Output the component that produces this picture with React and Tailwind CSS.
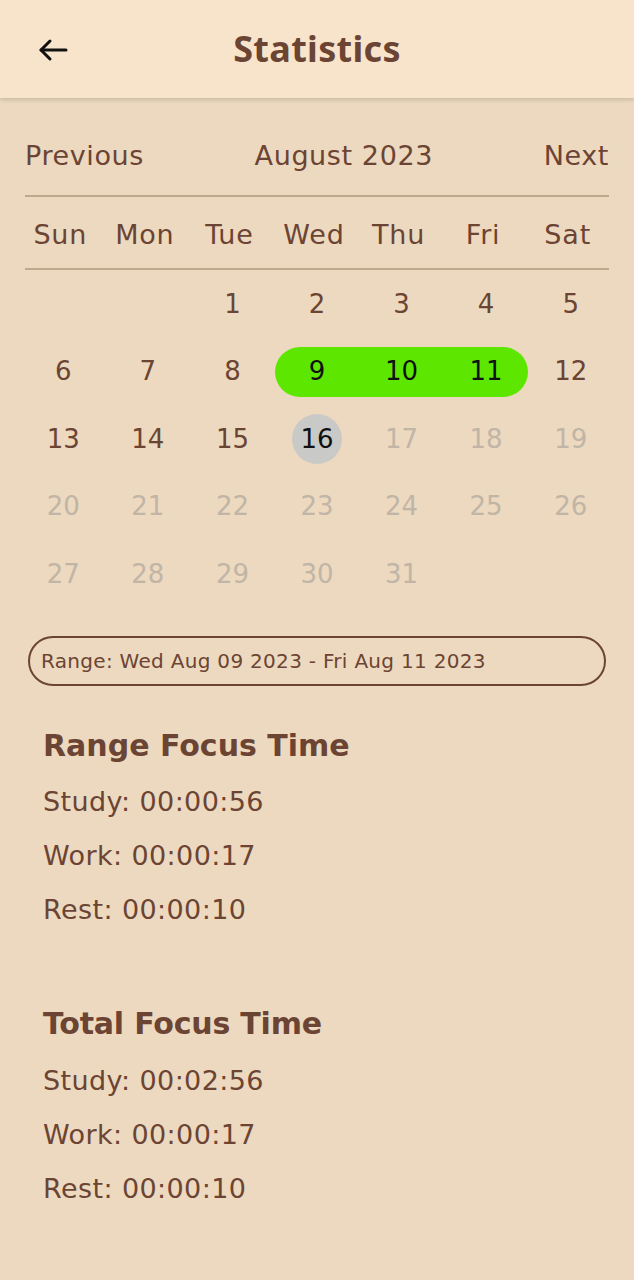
import React from "react";

const brown = "text-[#6b4434]";

function Arrow() {
  return (
    <svg width="32" height="24" viewBox="0 0 32 24" fill="none" stroke="#111" strokeWidth="3" strokeLinecap="round" strokeLinejoin="round">
      <path d="M29 12H4" />
      <path d="M13 3L4 12L13 21" />
    </svg>
  );
}

const rows = [
  [null, null, 1, 2, 3, 4, 5],
  [6, 7, 8, 9, 10, 11, 12],
  [13, 14, 15, 16, 17, 18, 19],
  [20, 21, 22, 23, 24, 25, 26],
  [27, 28, 29, 30, 31, null, null],
];

function Cell({ d }) {
  if (d === null) return <div className="h-[50px]" />;
  let cls = "h-[50px] flex items-center justify-center text-[26px] ";
  let inner = null;
  if (d >= 9 && d <= 11) {
    cls += "bg-[#5ce600] text-[#111]";
    if (d === 9) cls += " rounded-l-full";
    if (d === 11) cls += " rounded-r-full";
    inner = d;
  } else if (d === 16) {
    return (
      <div className={cls}>
        <div className="w-[50px] h-[50px] rounded-full bg-[#c9c9c7] flex items-center justify-center text-[#111]">16</div>
      </div>
    );
  } else if (d > 16) {
    cls += "text-[#c0b5a6]";
    inner = d;
  } else {
    cls += "text-[#6b4434]";
    inner = d;
  }
  return <div className={cls}>{inner}</div>;
}

export default function App() {
  const font = { fontFamily: "'DejaVu Sans', 'Noto Sans', sans-serif" };
  return (
    <div className="w-[634px] h-[1280px] bg-[#edd9bf] flex flex-col" style={font}>
      <div className="h-[98px] bg-[#f8e4cb] shadow-[0_2px_4px_rgba(0,0,0,0.15)] relative flex items-center justify-center shrink-0">
        <div className="absolute left-[37px] top-[38px]"><Arrow /></div>
        <div className={`text-[36px] font-bold tracking-[0.3px] ${brown}`} style={{ fontFamily: "'Noto Sans', sans-serif" }}>Statistics</div>
      </div>

      <div className={`mt-[42px] h-[32px] mx-[25px] flex items-center justify-between text-[27px] tracking-[0.6px] ${brown}`}>
        <span>Previous</span>
        <span>August 2023</span>
        <span>Next</span>
      </div>
      <div className="mt-[23px] mx-[25px] h-[2px] bg-[#bfa98e]" />

      <div className={`mt-[18px] h-[36px] pl-[18px] pr-[24px] grid grid-cols-7 text-[27px] tracking-[0.8px] ${brown}`}>
        {["Sun", "Mon", "Tue", "Wed", "Thu", "Fri", "Sat"].map((d) => (
          <div key={d} className="flex items-center justify-center">{d}</div>
        ))}
      </div>
      <div className="mt-[17px] mx-[25px] h-[2px] bg-[#bfa98e]" />

      <div className="mt-[9px] px-[21px] grid grid-cols-7 gap-y-[17.5px]">
        {rows.flat().map((d, i) => (
          <Cell key={i} d={d} />
        ))}
      </div>

      <div className={`mt-[37px] mx-[28px] h-[50px] rounded-full border-2 border-[#6b4434] flex items-center px-[11px] text-[20px] tracking-[0.3px] ${brown}`}>
        Range: Wed Aug 09 2023 - Fri Aug 11 2023
      </div>

      <div className={`pl-[43px] ${brown}`}>
        <div className="mt-[39px] h-[40px] flex items-center text-[30px] font-bold">Range Focus Time</div>
        <div className="mt-[10px] h-[54px] flex items-center text-[27px] tracking-[0.4px]">Study: 00:00:56</div>
        <div className="h-[54px] flex items-center text-[27px] tracking-[0.4px]">Work: 00:00:17</div>
        <div className="h-[54px] flex items-center text-[27px] tracking-[0.4px]">Rest: 00:00:10</div>

        <div className="mt-[66px] h-[40px] flex items-center text-[30px] font-bold tracking-[-0.2px]">Total Focus Time</div>
        <div className="mt-[11px] h-[54px] flex items-center text-[27px] tracking-[0.4px]">Study: 00:02:56</div>
        <div className="h-[54px] flex items-center text-[27px] tracking-[0.4px]">Work: 00:00:17</div>
        <div className="h-[54px] flex items-center text-[27px] tracking-[0.4px]">Rest: 00:00:10</div>
      </div>
    </div>
  );
}
